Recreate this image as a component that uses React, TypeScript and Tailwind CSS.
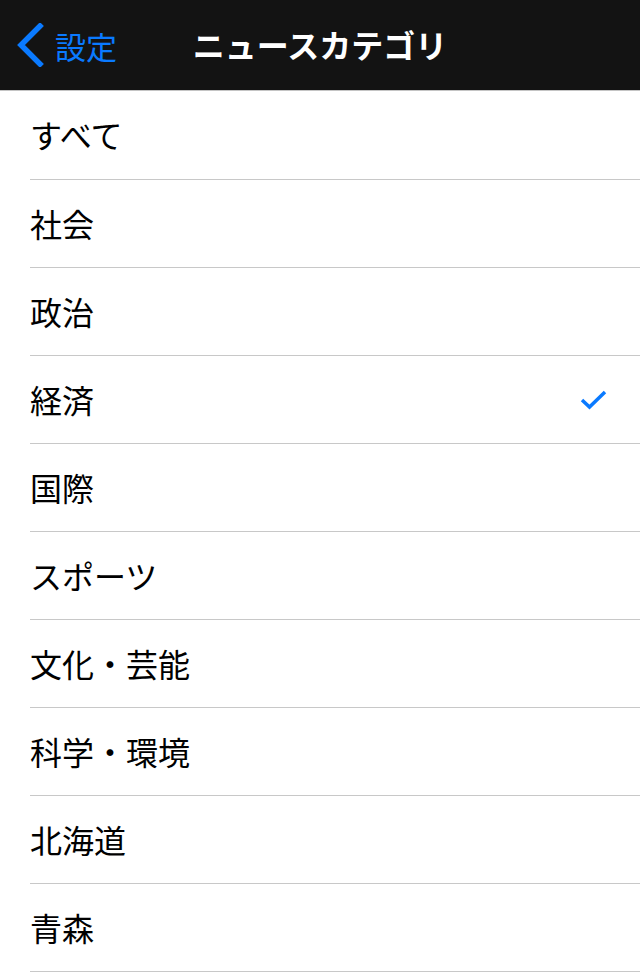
import React from "react";

const items = [
  "すべて",
  "社会",
  "政治",
  "経済",
  "国際",
  "スポーツ",
  "文化・芸能",
  "科学・環境",
  "北海道",
  "青森",
];

export default function App() {
  return (
    <div
      className="w-[640px] h-[977px] overflow-hidden bg-white"
      style={{ fontFamily: '"Noto Sans CJK JP", "Noto Sans", sans-serif' }}
    >
      <div className="relative h-[90px] bg-[#131313] border-b border-[#c4c4c4] box-content flex items-center justify-center">
        <div className="absolute left-0 top-0 h-[90px] flex items-center pl-[15px]">
          <svg width="30" height="44" viewBox="0 0 30 44" className="mr-[10px]">
            <path
              d="M25 3 L6 22 L25 41"
              fill="none"
              stroke="#0a7aff"
              strokeWidth="5.5"
              strokeLinecap="square"
            />
          </svg>
          <span className="text-[31px] leading-none text-[#0a7aff]">設定</span>
        </div>
        <span className="text-[32px] leading-none font-bold text-white -translate-y-[1px]">
          ニュースカテゴリ
        </span>
      </div>
      <div className="pl-[30px]">
        {items.map((t, i) => (
          <div
            key={t}
            className={`${i === 0 ? "h-[88px]" : "h-[87px]"} box-content border-b border-[#c8c8c8] flex items-center justify-between pr-[32px]`}
          >
            <span className="text-[32px] leading-none text-black -translate-y-[1px]">{t}</span>
            {t === "経済" && (
              <svg width="28" height="22" viewBox="0 0 28 22">
                <path
                  d="M2 11 L9.5 18 L25 3"
                  fill="none"
                  stroke="#0a7aff"
                  strokeWidth="3.5"
                />
              </svg>
            )}
          </div>
        ))}
      </div>
    </div>
  );
}
